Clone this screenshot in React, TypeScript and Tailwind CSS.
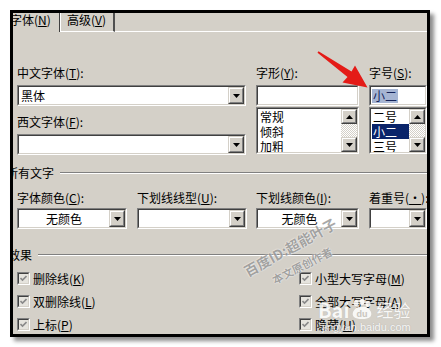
import React from "react";

const font = { fontFamily: '"Noto Sans CJK SC", "Noto Sans", sans-serif' };

const Key = ({ k }: { k: string }) => (
  <>
    (<span className="underline underline-offset-1">{k}</span>)
  </>
);

const Sunken = ({ className, children }: { className?: string; children?: React.ReactNode }) => (
  <div className={`border border-t-[#808080] border-l-[#808080] border-r-white border-b-white ${className ?? ""}`}>
    <div className="h-full border border-t-[#404040] border-l-[#404040] border-r-[#d4d0c8] border-b-[#d4d0c8] bg-white flex overflow-hidden">
      {children}
    </div>
  </div>
);

const Arrow = ({ up }: { up?: boolean }) => (
  <svg width="7" height="4" viewBox="0 0 7 4">
    {up ? <polygon points="0,4 7,4 3.5,0" fill="#000" /> : <polygon points="0,0 7,0 3.5,4" fill="#000" />}
  </svg>
);

const Btn = ({ className, up }: { className?: string; up?: boolean }) => (
  <div className={`border border-t-[#d4d0c8] border-l-[#d4d0c8] border-r-[#404040] border-b-[#404040] ${className ?? ""}`}>
    <div className="h-full border border-t-white border-l-white border-r-[#808080] border-b-[#808080] bg-[#d4d0c8] flex items-center justify-center">
      <Arrow up={up} />
    </div>
  </div>
);

const Combo = ({ width, text, center }: { width: string; text?: string; center?: boolean }) => (
  <Sunken className={`${width} h-[21px]`}>
    <div className={`flex-1 flex items-center text-[12px] leading-[14px] ${center ? "justify-center" : "pl-[2px]"}`}>{text}</div>
    <Btn className="w-[16px] h-full" />
  </Sunken>
);

const ListBox = ({ items, selected }: { items: string[]; selected?: number }) => (
  <Sunken className="w-full h-[47px]">
    <div className="flex-1 flex flex-col pl-[1px]">
      {items.map((it, i) => (
        <div
          key={it}
          className={`h-[15px] shrink-0 flex items-center text-[12px] leading-[14px] pl-[1px] ${i === selected ? "bg-[#0a246a] text-white" : ""}`}
        >
          {it}
        </div>
      ))}
    </div>
    <div className="w-[16px] flex flex-col">
      <Btn className="h-[15px]" up />
      <div className="flex-1 bg-[repeating-conic-gradient(#d4d0c8_0_25%,#ffffff_0_50%)] bg-[length:2px_2px]" />
      <Btn className="h-[15px]" />
    </div>
  </Sunken>
);

const Label = ({ children }: { children: React.ReactNode }) => (
  <div className="h-[14px] text-[12px] leading-[14px] whitespace-nowrap">{children}</div>
);

const Group = ({ title, shift }: { title: string; shift: string }) => (
  <div className={`flex items-center h-[14px] ${shift}`}>
    <span className="text-[12px] leading-[14px] whitespace-nowrap">{title}</span>
    <div className="flex-1 ml-[6px] border-t border-t-[#808080] border-b border-b-white" />
  </div>
);

const Check = ({ label }: { label: React.ReactNode }) => (
  <div className="h-[23px] flex items-center">
    <div className="w-[13px] h-[13px] border border-t-[#808080] border-l-[#808080] border-r-white border-b-white">
      <div className="w-full h-full border border-t-[#404040] border-l-[#404040] border-r-[#d4d0c8] border-b-[#d4d0c8] bg-[#e6e4de] flex items-center justify-center">
        <svg width="7" height="7" viewBox="0 0 7 7">
          <polyline points="0.5,3 2.5,5 6.5,1" fill="none" stroke="#8a8a8a" strokeWidth="1.6" />
        </svg>
      </div>
    </div>
    <span className="ml-[3px] text-[12px] leading-[14px] whitespace-nowrap">{label}</span>
  </div>
);

export default function App() {
  return (
    <div className="relative w-[441px] h-[347px] bg-white overflow-hidden text-black" style={font}>
      <div className="ml-[10px] mt-[10px] w-[420px] h-[327px] border-[3px] border-black bg-[#d4d0c8] overflow-hidden shadow-[4px_4px_4px_rgba(0,0,0,0.45)]">
        {/* tabs */}
        <div className="flex h-[19px]">
          <div className="w-[47px] shrink-0 border-r border-r-[#404040] overflow-hidden">
            <div className="-ml-[3px] text-[12px] leading-[14px] whitespace-nowrap">
              字体<Key k="N" />
            </div>
          </div>
          <div className="w-[55px] shrink-0 border-l border-l-white border-r-2 border-r-[#505050] border-b border-b-white text-[12px] leading-[14px] pl-[6px] whitespace-nowrap">
            高级<Key k="V" />
          </div>
          <div className="flex-1 border-b border-b-white" />
        </div>

        <div className="pl-[4px] pt-[34px]">
          <div className="flex">
            <div className="w-[229px] shrink-0 flex flex-col">
              <Label>
                中文字体<Key k="T" />:
              </Label>
              <div className="mt-[5px]">
                <Combo width="w-full" text="黑体" />
              </div>
              <div className="mt-[9px]">
                <Label>
                  西文字体<Key k="F" />:
                </Label>
              </div>
              <div className="mt-[5px]">
                <Combo width="w-full" />
              </div>
            </div>
            <div className="w-[103px] shrink-0 ml-[10px] flex flex-col">
              <Label>
                字形<Key k="Y" />:
              </Label>
              <Sunken className="mt-[5px] h-[21px]" />
              <div className="mt-[1px]">
                <ListBox items={["常规", "倾斜", "加粗"]} />
              </div>
            </div>
            <div className="w-[58px] shrink-0 ml-[10px] flex flex-col">
              <Label>
                字号<Key k="S" />:
              </Label>
              <Sunken className="mt-[5px] h-[21px]">
                <div className="flex items-center pl-[1px]">
                  <span className="text-[12px] leading-[14px] bg-[#a6b5d3] text-[#14235a] px-[1px]">小二</span>
                </div>
              </Sunken>
              <div className="mt-[1px]">
                <ListBox items={["二号", "小二", "三号"]} selected={1} />
              </div>
            </div>
          </div>

          <div className="mt-[11px]">
            <Group title="所有文字" shift="-ml-[11px]" />
          </div>

          <div className="mt-[11px] flex">
            <div className="w-[110px] shrink-0">
              <Label>
                字体颜色<Key k="C" />:
              </Label>
              <div className="mt-[3px]">
                <Combo width="w-full" text="无颜色" center />
              </div>
            </div>
            <div className="w-[110px] shrink-0 ml-[10px]">
              <Label>
                下划线线型<Key k="U" />:
              </Label>
              <div className="mt-[3px]">
                <Combo width="w-full" />
              </div>
            </div>
            <div className="w-[103px] shrink-0 ml-[9px]">
              <Label>
                下划线颜色<Key k="I" />:
              </Label>
              <div className="mt-[3px]">
                <Combo width="w-full" text="无颜色" center />
              </div>
            </div>
            <div className="w-[58px] shrink-0 ml-[10px]">
              <Label>
                着重号<Key k="·" />:
              </Label>
              <div className="mt-[3px]">
                <Combo width="w-full" />
              </div>
            </div>
          </div>

          <div className="mt-[19px]">
            <Group title="效果" shift="-ml-[9px]" />
          </div>

          <div className="mt-[5px] flex">
            <div className="w-[282px] shrink-0">
              <Check label={<>删除线<Key k="K" /></>} />
              <Check label={<>双删除线<Key k="L" /></>} />
              <Check label={<>上标<Key k="P" /></>} />
            </div>
            <div>
              <Check label={<>小型大写字母<Key k="M" /></>} />
              <Check label={<>全部大写字母<Key k="A" /></>} />
              <Check label={<>隐藏<Key k="H" /></>} />
            </div>
          </div>
        </div>
      </div>

      {/* red arrow */}
      <svg className="absolute left-0 top-0 pointer-events-none" width="441" height="347">
        <polygon
          points="317.5,52.8 318.5,51.2 351.5,71.5 355,65.5 367.5,87.5 342.5,82.5 347.5,77"
          fill="#e41b17"
        />
      </svg>

      {/* watermark */}
      <div
        className="absolute left-[225px] top-[238px] w-[130px] text-center text-[14px] leading-[18px] font-bold text-[#9a9a9a] opacity-85 whitespace-nowrap -rotate-[29deg]"
        style={{ textShadow: "0 0 2px #fff, 0 0 1px #fff" }}
      >
        百度ID:超能叶子
      </div>
      <div
        className="absolute left-[257px] top-[258px] w-[90px] text-center text-[11px] leading-[14px] font-bold text-[#9a9a9a] opacity-85 whitespace-nowrap -rotate-[27deg]"
        style={{ textShadow: "0 0 2px #fff, 0 0 1px #fff" }}
      >
        本文原创作者
      </div>

      {/* baidu logo */}
      <div className="absolute left-[318px] top-[299px] flex flex-col items-start opacity-85">
        <div className="flex items-center h-[22px]">
          <span className="text-[20px] font-bold text-white leading-[22px]" style={{ textShadow: "0 0 1px #aaa" }}>
            Bai
          </span>
          <svg width="24" height="22" viewBox="0 0 24 22">
            <ellipse cx="6" cy="4" rx="2.5" ry="3" fill="#fff" />
            <ellipse cx="12" cy="3" rx="2.5" ry="3" fill="#fff" />
            <ellipse cx="18" cy="5" rx="2.5" ry="3" fill="#fff" />
            <path d="M3 13 Q6 7 12 8 Q18 7 21 13 Q23 20 12 20 Q1 20 3 13Z" fill="#fff" />
            <text x="12" y="18" textAnchor="middle" fontSize="9" fontWeight="bold" fill="#c8c4bc" fontFamily="Liberation Sans, sans-serif">
              du
            </text>
          </svg>
          <span className="ml-[3px] text-[17px] text-white leading-[22px]" style={{ textShadow: "0 0 1px #aaa" }}>
            经验
          </span>
        </div>
        <div className="text-[11px] leading-[12px] text-white ml-[4px]" style={{ textShadow: "0 0 1px #999", fontFamily: '"Liberation Sans", sans-serif' }}>
          jingyan.baidu.com
        </div>
      </div>
    </div>
  );
}
